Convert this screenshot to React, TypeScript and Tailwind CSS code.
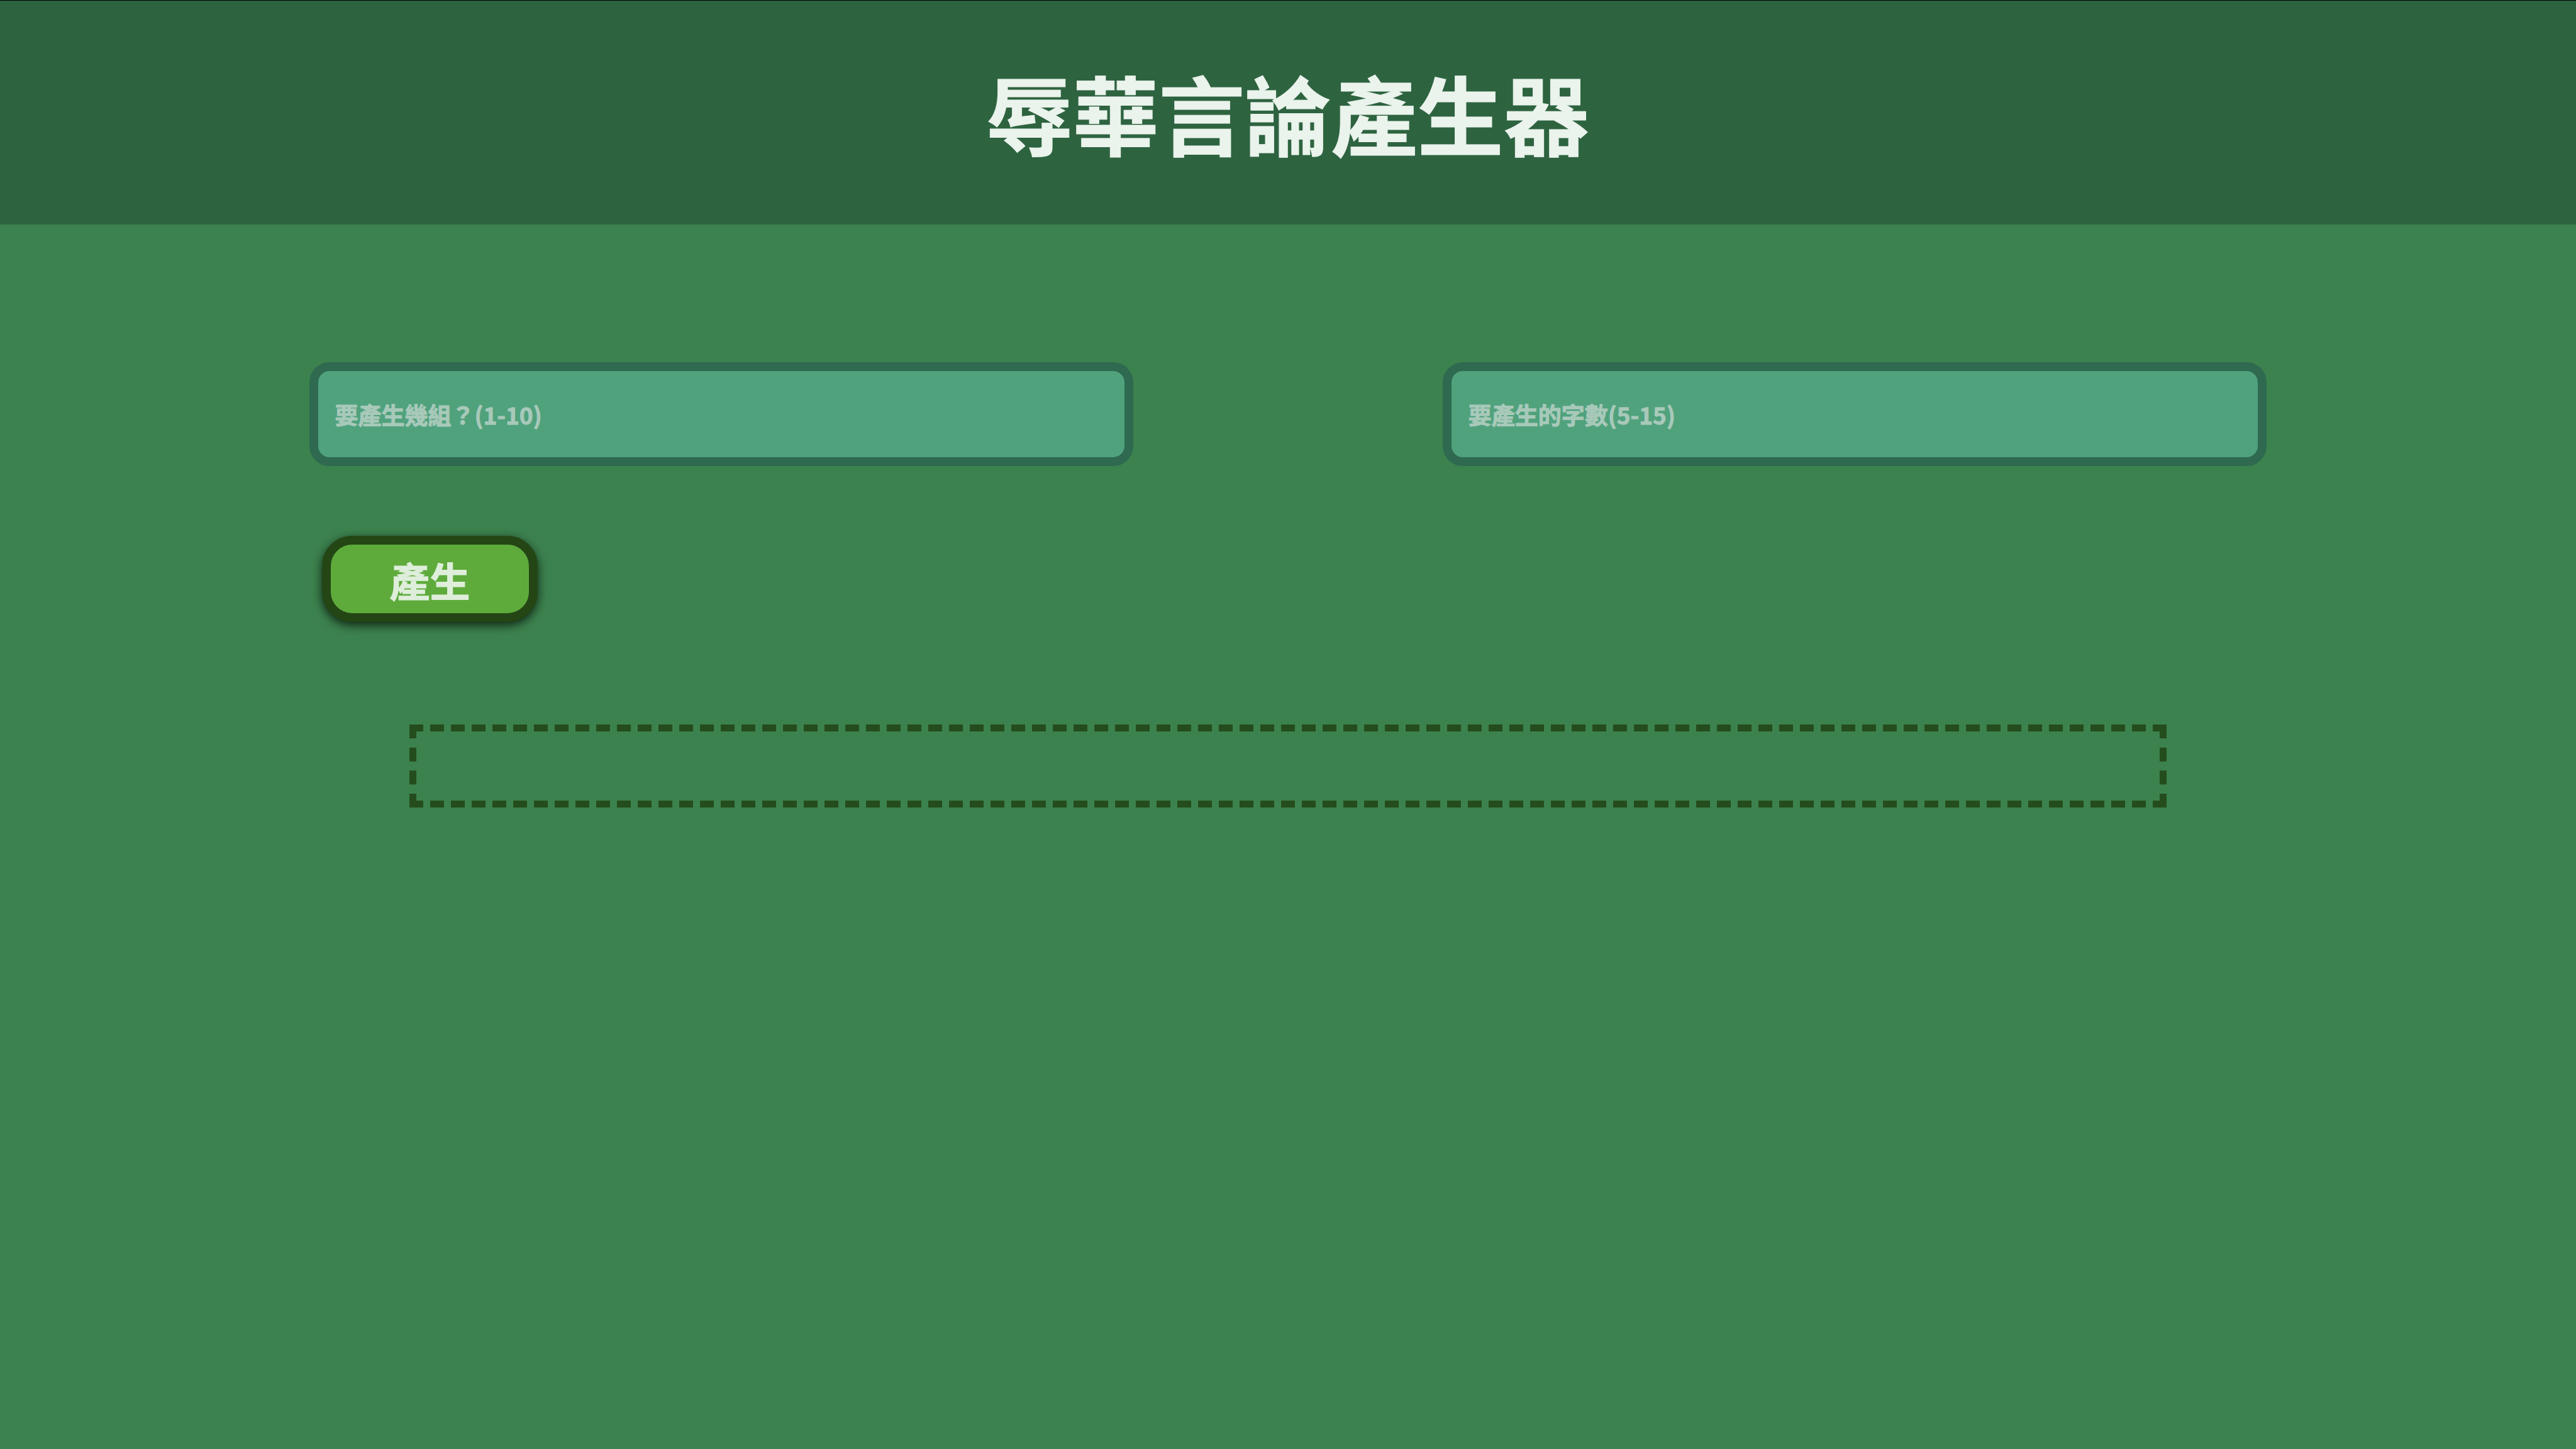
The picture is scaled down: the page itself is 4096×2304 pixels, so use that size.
import { useState } from "react";

const fieldClass =
  "h-[165px] w-full rounded-[32px] border-[14px] border-[#2e6950] bg-[#50a27d] px-[27px] text-[37px] font-bold text-[#eaf3ec] outline-none placeholder:text-[#a8c9ba] placeholder:opacity-100";

export default function App() {
  const [groups, setGroups] = useState("");
  const [length, setLength] = useState("");

  return (
    <div className="min-h-screen bg-[#3c824e] font-['Noto_Sans_CJK_TC',sans-serif] font-bold [-webkit-text-stroke:1px]">
      <header className="flex h-[357px] items-center justify-center border-t border-black bg-[#2e6340]">
        <h1 className="text-[137px] leading-normal font-bold text-[#eaf3ec]">辱華言論產生器</h1>
      </header>
      <main className="pt-[219px]">
        <form onSubmit={(e) => e.preventDefault()}>
          <div className="grid grid-cols-2 gap-x-[12vw] px-[12vw]">
            <input
              className={fieldClass}
              aria-label="要產生幾組？(1-10)"
              placeholder="要產生幾組？(1-10)"
              value={groups}
              onChange={(e) => setGroups(e.target.value)}
            />
            <input
              className={fieldClass}
              aria-label="要產生的字數(5-15)"
              placeholder="要產生的字數(5-15)"
              value={length}
              onChange={(e) => setLength(e.target.value)}
            />
          </div>
          <button
            type="submit"
            className="mt-[111px] ml-[12.5vw] flex h-[137px] w-[343px] items-center justify-center rounded-[48px] border-[14px] border-[#244615] bg-[#5eab3c] text-[64px] leading-none font-bold text-[#dfeedb] shadow-[0_5px_16px_rgba(0,0,0,0.75)]"
          >
            產生
          </button>
        </form>
        <section
          aria-label="產生"
          className="mx-auto mt-[163px] box-content h-[22px] w-[65%] border-[11px] border-dashed border-[#244c1c] px-[55px] py-[44px]"
        />
      </main>
    </div>
  );
}
